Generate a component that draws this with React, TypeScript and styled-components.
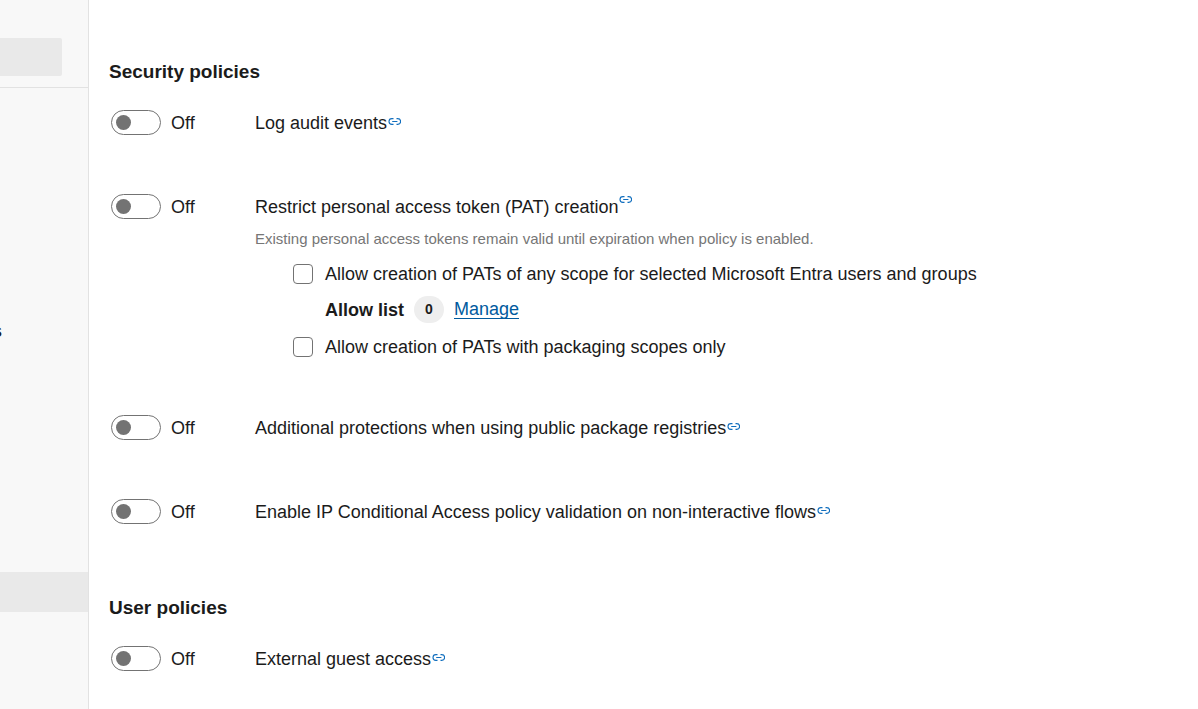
import React, { useState } from "react";
import styled, { createGlobalStyle } from "styled-components";

const GlobalStyle = createGlobalStyle`
  *, *::before, *::after { box-sizing: border-box; }
  body {
    margin: 0;
    background: #ffffff;
    color: #1b1b1b;
    font-family: "Liberation Sans", Arial, sans-serif;
    font-size: 18px;
    line-height: 24px;
  }
`;

const Page = styled.div`
  display: grid;
  grid-template-columns: 89px minmax(0, 1fr);
  min-height: 100vh;
`;

const Sidebar = styled.aside`
  display: flex;
  flex-direction: column;
  background: #f8f8f8;
  border-right: 1px solid #e2e2e2;
`;

const SidebarHeader = styled.div`
  padding: 38px 26px 11px 0;
  border-bottom: 1px solid #e2e2e2;
`;

const SearchSlot = styled.div`
  height: 38px;
  background: #e9e9e9;
  border-radius: 0 2px 2px 0;
`;

const Nav = styled.nav`
  display: flex;
  flex-direction: column;
  padding-top: 223px;
`;

const NavItem = styled.a<{ $active?: boolean }>`
  display: flex;
  align-items: center;
  justify-content: flex-end;
  height: 40px;
  padding-right: 86px;
  margin-top: ${(p) => (p.$active ? "221px" : "0")};
  background: ${(p) => (p.$active ? "#e9e9e9" : "transparent")};
  color: inherit;
  font-weight: 700;
  text-decoration: none;
`;

const Main = styled.main`
  padding: 60px 20px 0;
`;

const Section = styled.section`
  display: flex;
  flex-direction: column;
  gap: 56px;

  & + & { margin-top: 69px; }
`;

const SectionTitle = styled.h2`
  margin: 0 0 -30px;
  font-size: 19px;
  line-height: 24px;
  font-weight: 700;
`;

const PolicyRow = styled.div`
  display: grid;
  grid-template-columns: 144px minmax(0, 1fr);
  align-items: start;
  min-height: 28px;
  padding-left: 2px;
`;

const SwitchLabel = styled.label`
  display: flex;
  align-items: center;
  gap: 10px;
  height: 25px;
`;

const Switch = styled.input`
  appearance: none;
  display: flex;
  align-items: center;
  width: 50px;
  height: 25px;
  margin: 0;
  padding-left: 4px;
  border: 1px solid #737373;
  border-radius: 13px;
  background: #ffffff;

  &::before {
    content: "";
    width: 15px;
    height: 15px;
    border-radius: 50%;
    background: #737373;
  }
  &:checked { background: #005a9e; }
  &:checked::before { margin-left: 24px; background: #ffffff; }
`;

const PolicyTitle = styled.div`
  display: flex;
  align-items: center;
  gap: 1px;
  min-height: 25px;
`;

const InfoLink = styled.a<{ $raised?: boolean }>`
  display: flex;
  align-self: ${(p) => (p.$raised ? "flex-start" : "center")};
  padding: ${(p) => (p.$raised ? "2px 0 0" : "0 0 2px")};
  color: #106ebe;
`;

const Note = styled.p`
  margin: 8px 0 0;
  color: #767676;
  font-size: 15px;
  line-height: 24px;
`;

const Options = styled.div`
  display: flex;
  flex-direction: column;
  gap: 10px;
  padding: 11px 0 0 38px;
`;

const CheckLabel = styled.label`
  display: flex;
  align-items: center;
  gap: 12px;
`;

const Checkbox = styled.input`
  appearance: none;
  width: 20px;
  height: 20px;
  margin: 0;
  border: 1px solid #737373;
  border-radius: 4px;
  background: #ffffff;

  &:checked { background: #005a9e; }
`;

const AllowList = styled.div`
  display: flex;
  align-items: center;
  gap: 10px;
  padding: 0 0 2px 32px;
`;

const Count = styled.span`
  width: 30px;
  border-radius: 14px;
  background: #eeeeee;
  font-size: 14px;
  line-height: 27px;
  font-weight: 700;
  text-align: center;
`;

const ManageLink = styled.a`
  color: #005a9e;
  line-height: 18px;
  text-decoration: none;
  border-bottom: 1px solid #005a9e;
`;

const LinkIcon = () => (
  <svg width="13" height="7" viewBox="0 0 13 7" fill="none" stroke="currentColor" strokeWidth="1.1" aria-hidden="true">
    <path d="M5.5 .6H3.9a2.9 2.9 0 0 0 0 5.8h1.6M8.5 .6h1.2a2.9 2.9 0 0 1 0 5.8H8.5M4.2 3.5h5.2" />
  </svg>
);

interface PolicyProps {
  title: string;
  raised?: boolean;
  children?: React.ReactNode;
}

function Policy({ title, raised, children }: PolicyProps) {
  const [on, setOn] = useState(false);
  return (
    <PolicyRow>
      <SwitchLabel>
        <Switch type="checkbox" role="switch" aria-description={title} checked={on} onChange={() => setOn(!on)} />
        {on ? "On" : "Off"}
      </SwitchLabel>
      <div>
        <PolicyTitle>
          <span>{title}</span>
          <InfoLink href="#" $raised={raised}>
            <LinkIcon />
          </InfoLink>
        </PolicyTitle>
        {children}
      </div>
    </PolicyRow>
  );
}

export default function App() {
  return (
    <>
      <GlobalStyle />
      <Page>
        <Sidebar>
          <SidebarHeader>
            <SearchSlot />
          </SidebarHeader>
          <Nav>
            <NavItem href="#">s</NavItem>
            <NavItem href="#" $active />
          </Nav>
        </Sidebar>
        <Main>
          <Section>
            <SectionTitle>Security policies</SectionTitle>
            <Policy title="Log audit events" />
            <Policy title="Restrict personal access token (PAT) creation" raised>
              <Note>Existing personal access tokens remain valid until expiration when policy is enabled.</Note>
              <Options>
                <CheckLabel>
                  <Checkbox type="checkbox" />
                  Allow creation of PATs of any scope for selected Microsoft Entra users and groups
                </CheckLabel>
                <AllowList>
                  <strong>Allow list</strong>
                  <Count>0</Count>
                  <ManageLink href="#">Manage</ManageLink>
                </AllowList>
                <CheckLabel>
                  <Checkbox type="checkbox" />
                  Allow creation of PATs with packaging scopes only
                </CheckLabel>
              </Options>
            </Policy>
            <Policy title="Additional protections when using public package registries" />
            <Policy title="Enable IP Conditional Access policy validation on non-interactive flows" />
          </Section>
          <Section>
            <SectionTitle>User policies</SectionTitle>
            <Policy title="External guest access" />
          </Section>
        </Main>
      </Page>
    </>
  );
}
